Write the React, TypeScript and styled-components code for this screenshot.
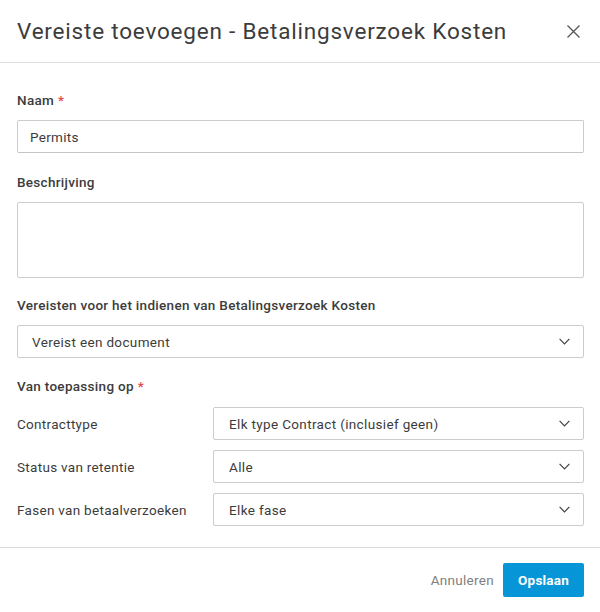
import React from 'react';
import styled, { createGlobalStyle } from 'styled-components';

const GlobalStyle = createGlobalStyle`
    html, body {
        margin: 0;
        padding: 0;
        background: #ffffff;
    }
    body {
        font-family: Roboto, "Liberation Sans", sans-serif;
        color: #3c3c3c;
    }
`;

const Dialog = styled.div`
    width: 600px;
    height: 612px;
    display: flex;
    flex-direction: column;
    background: #ffffff;
`;

const Header = styled.div`
    height: 62px;
    display: flex;
    align-items: center;
    justify-content: space-between;
    padding: 0 17px 0 17px;
    border-bottom: 1px solid #dcdcdc;
`;

const Title = styled.h2`
    margin: 0;
    font-size: 22.5px;
    font-weight: 400;
    color: #3c3c3c;
    letter-spacing: 0.8px;
`;

const CloseButton = styled.button`
    border: none;
    background: none;
    padding: 0;
    margin-right: 3px;
    width: 14px;
    height: 14px;
    display: flex;
    align-items: center;
    justify-content: center;
    cursor: pointer;
`;

const Body = styled.div`
    padding: 27px 16px 20px 17px;
    display: flex;
    flex-direction: column;
`;

const Label = styled.div<{ $gap?: number }>`
    font-size: 13.5px;
    font-weight: 500;
    line-height: 20px;
    letter-spacing: 0.3px;
    color: #3c3c3c;
    margin-bottom: ${props => props.$gap ?? 10}px;
`;

const Required = styled.span`
    color: #e8474a;
    margin-left: 4px;
`;

const Input = styled.div`
    box-sizing: border-box;
    height: 33px;
    border: 1px solid #cccccc;
    border-bottom-color: #c4c4c4;
    border-radius: 2px;
    padding: 0 12px;
    display: flex;
    align-items: center;
    font-size: 13.5px;
    letter-spacing: 0.3px;
    color: #3c3c3c;
    margin-bottom: 19px;
`;

const TextArea = styled.div`
    box-sizing: border-box;
    height: 76px;
    border: 1px solid #cccccc;
    border-radius: 2px;
    margin-bottom: 17px;
`;

const Select = styled.div<{ $inRow?: boolean }>`
    box-sizing: border-box;
    flex: ${props => (props.$inRow ? '1' : 'none')};
    height: 33px;
    border: 1px solid #cccccc;
    border-radius: 2px;
    padding: 0 12px 0 ${props => (props.$inRow ? 15 : 14)}px;
    display: flex;
    align-items: center;
    justify-content: space-between;
    font-size: 13.5px;
    letter-spacing: 0.35px;
    color: #3c3c3c;
    margin-bottom: ${props => (props.$inRow ? 0 : 18)}px;
`;

const Row = styled.div<{ $last?: boolean }>`
    display: flex;
    align-items: center;
    margin-bottom: ${props => (props.$last ? 0 : 10)}px;
`;

const RowLabel = styled.div`
    width: 196px;
    font-size: 13.5px;
    letter-spacing: 0.3px;
    color: #3c3c3c;
`;

const Footer = styled.div`
    margin-top: auto;
    border-top: 1px solid #dcdcdc;
    height: 65px;
    display: flex;
    align-items: flex-start;
    justify-content: flex-end;
    gap: 9px;
    padding: 15px 16px 0 0;
    box-sizing: border-box;
`;

const TextButton = styled.button`
    border: none;
    background: none;
    height: 34px;
    padding: 0;
    font-family: inherit;
    font-size: 13.5px;
    letter-spacing: 0.3px;
    color: #808080;
`;

const PrimaryButton = styled.button`
    border: none;
    background: #0696d7;
    color: #ffffff;
    height: 34px;
    width: 81px;
    border-radius: 2px;
    font-family: inherit;
    font-size: 13.5px;
    font-weight: 700;
    letter-spacing: 0.2px;
`;

const Chevron = () => (
    <svg width="11" height="7" viewBox="0 0 11 7" fill="none" style={{ marginRight: 1 }}>
        <path d="M0.6 0.9 L5.5 5.8 L10.4 0.9" stroke="#444444" strokeWidth="1.2" />
    </svg>
);

const rows = [
    { label: 'Contracttype', value: 'Elk type Contract (inclusief geen)' },
    { label: 'Status van retentie', value: 'Alle' },
    { label: 'Fasen van betaalverzoeken', value: 'Elke fase' },
];

const App: React.FC = () => (
    <>
        <GlobalStyle />
        <Dialog>
            <Header>
                <Title>Vereiste toevoegen - Betalingsverzoek Kosten</Title>
                <CloseButton aria-label="Sluiten">
                    <svg width="13" height="13" viewBox="0 0 13 13">
                        <path d="M0.5 0.5 L12.5 12.5 M12.5 0.5 L0.5 12.5" stroke="#555555" strokeWidth="1.3" />
                    </svg>
                </CloseButton>
            </Header>
            <Body>
                <Label>
                    Naam<Required>*</Required>
                </Label>
                <Input>Permits</Input>

                <Label>Beschrijving</Label>
                <TextArea />

                <Label>Vereisten voor het indienen van Betalingsverzoek Kosten</Label>
                <Select>
                    <span>Vereist een document</span>
                    <Chevron />
                </Select>

                <Label $gap={11}>
                    Van toepassing op<Required>*</Required>
                </Label>
                {rows.map((row, i) => (
                    <Row key={row.label} $last={i === rows.length - 1}>
                        <RowLabel>{row.label}</RowLabel>
                        <Select $inRow>
                            <span>{row.value}</span>
                            <Chevron />
                        </Select>
                    </Row>
                ))}
            </Body>
            <Footer>
                <TextButton>Annuleren</TextButton>
                <PrimaryButton>Opslaan</PrimaryButton>
            </Footer>
        </Dialog>
    </>
);

export default App;
